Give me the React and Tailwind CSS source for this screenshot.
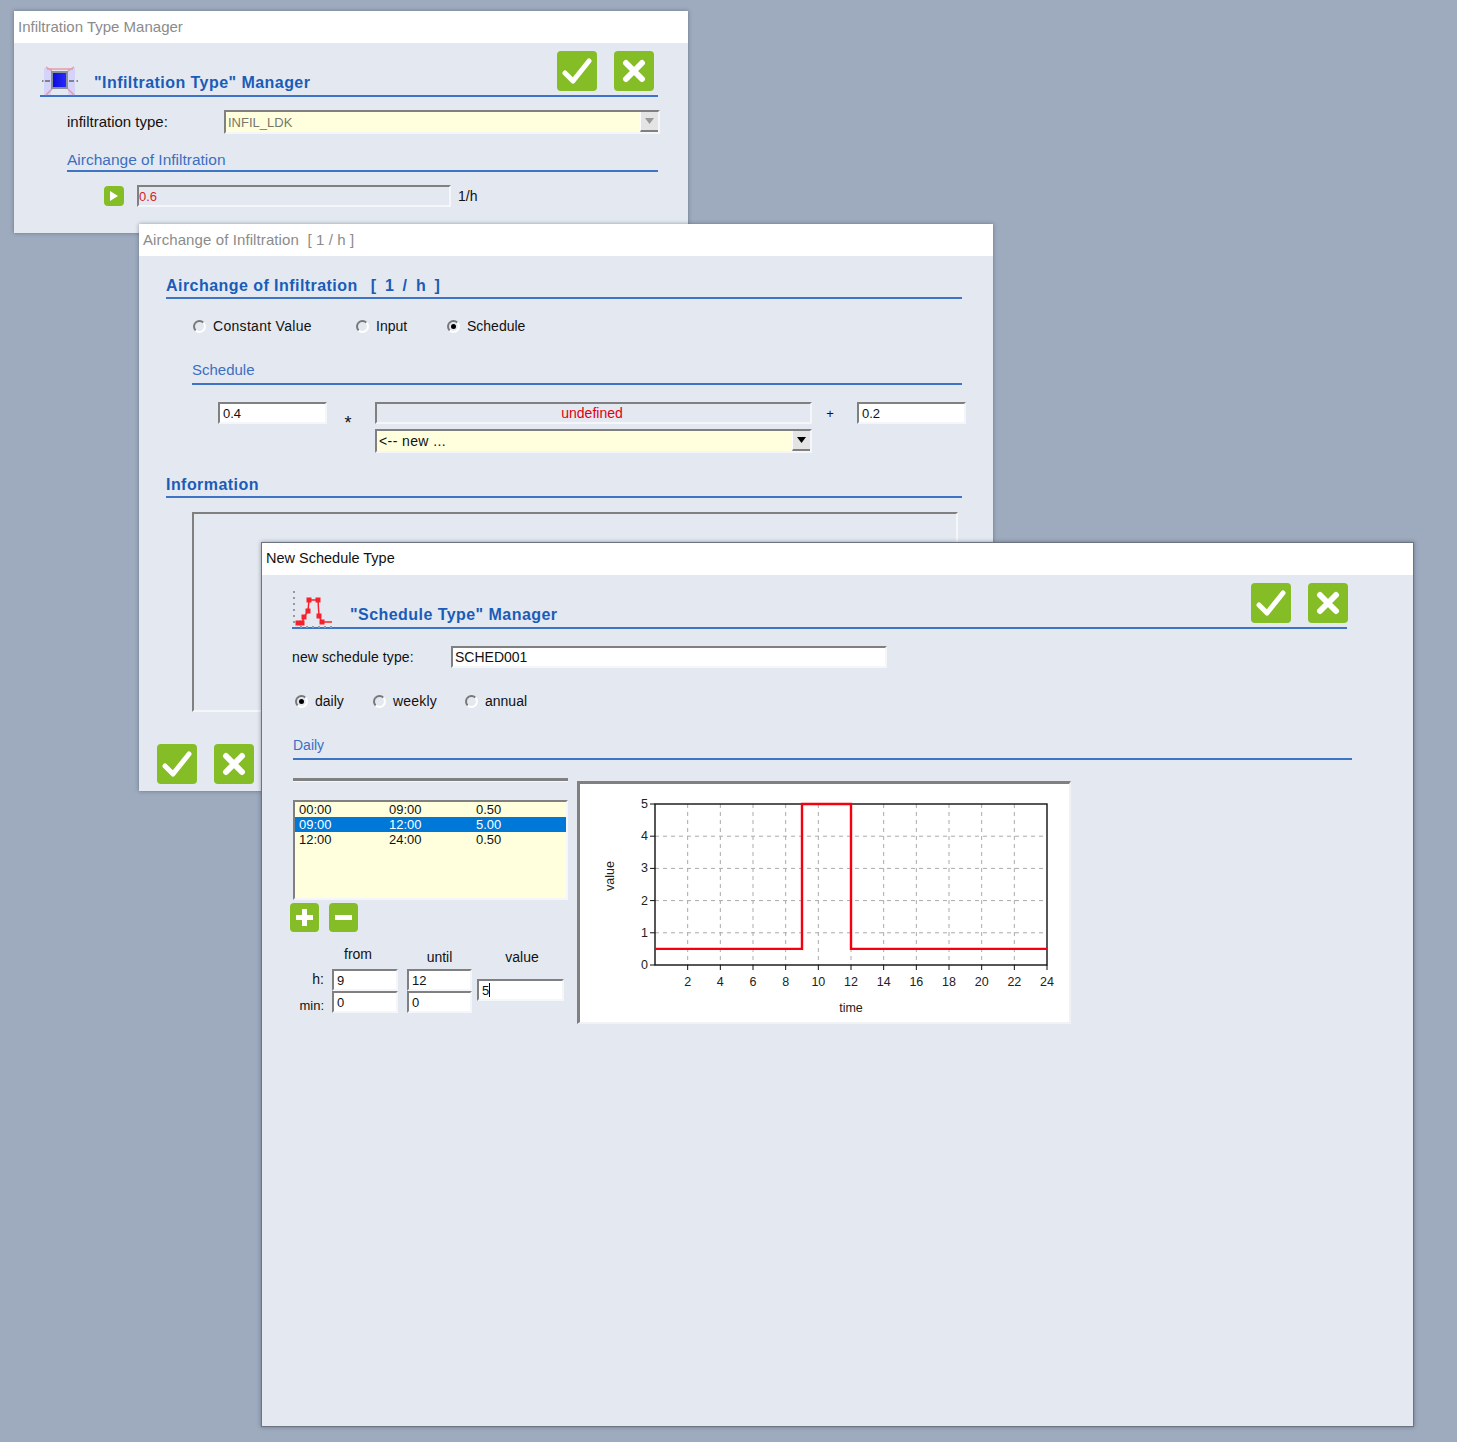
const Field = ({ className = "", children }) => (
  <div className={`flex items-center overflow-hidden border-t-2 border-l-2 border-t-[#808080] border-l-[#808080] border-r-2 border-b-2 border-r-[#f4f6f9] border-b-[#f4f6f9] text-[13px] leading-none ${className}`}>
    {children}
  </div>
);

const GreenButton = ({ className = "", children }) => (
  <div className={`flex shrink-0 items-center justify-center rounded-[4px] bg-[#84bd25] ${className}`}>{children}</div>
);

const CheckIcon = () => (
  <svg width="30" height="26" viewBox="0 0 30 26">
    <path d="M3 15 L11 23 L27 3" fill="none" stroke="#fff" strokeWidth="5" strokeLinejoin="round" strokeLinecap="round" />
  </svg>
);

const CrossIcon = () => (
  <svg width="24" height="24" viewBox="0 0 24 24">
    <path d="M4 4 L20 20 M20 4 L4 20" fill="none" stroke="#fff" strokeWidth="6" strokeLinecap="round" />
  </svg>
);

const OkCancel = ({ className = "" }) => (
  <div className={`flex gap-[17px] ${className}`}>
    <GreenButton className="h-[40px] w-[40px]"><CheckIcon /></GreenButton>
    <GreenButton className="h-[40px] w-[40px]"><CrossIcon /></GreenButton>
  </div>
);

const Radio = ({ label, checked, className = "" }) => (
  <div className={`flex items-center gap-[7px] text-[14px] leading-none text-[#111] ${className}`}>
    <span className="flex h-[13px] w-[13px] shrink-0 items-center justify-center rounded-full border-2 border-t-[#777] border-l-[#777] border-r-white border-b-white bg-[#e4e9f1]">
      {checked && <span className="h-[5px] w-[5px] shrink-0 rounded-full bg-black" />}
    </span>
    {label}
  </div>
);

const Section = ({ className = "", children }) => (
  <div className={`flex items-center border-b-2 border-[#3d74c4] leading-none text-[#3d6fc0] ${className}`}>
    {children}
  </div>
);

const BoldHeading = ({ children }) => (
  <span className="text-[16px] font-bold leading-none tracking-[0.45px] text-[#1a5cb8]">{children}</span>
);

const WindowIcon = () => (
  <svg width="40" height="34" viewBox="0 0 40 34" className="-mb-[2px] overflow-visible">
    <defs>
      <linearGradient id="paneBlue" x1="0" x2="1" y1="0" y2="0">
        <stop offset="0" stopColor="#0c0cd8" />
        <stop offset="1" stopColor="#2a2aff" />
      </linearGradient>
    </defs>
    <rect x="4" y="5" width="7" height="27" fill="#d4d4fa" />
    <rect x="28" y="5" width="7" height="27" fill="#d4d4fa" />
    <path d="M6 4 L12 8 M34 4 L28 8 M6 32 L12 26 M34 32 L28 26 M7 6 H33" fill="none" stroke="#e59aa8" strokeWidth="1.5" />
    <rect x="12" y="9" width="15" height="16" fill="url(#paneBlue)" stroke="#8a8f9e" strokeWidth="2" />
    <path d="M2 18 H3.5 M5 18 H10 M29 18 H34 M36.5 18 H38" stroke="#666" strokeWidth="1.5" />
  </svg>
);

const ScheduleIcon = () => {
  const points = [[6, 34], [10, 34], [12, 28], [16, 22], [17, 11], [26, 11], [27, 27], [30, 33]];
  return (
    <svg width="42" height="40" viewBox="0 0 42 40" className="-mb-[2px] overflow-visible">
      <path d="M2 2 V36 M8 38 H40" stroke="#999" strokeWidth="2" strokeDasharray="2 4" fill="none" />
      <polyline points="6,34 10,34 12,28 16,22 17,11 26,11 27,27 30,33 40,33" fill="none" stroke="#f5222d" strokeWidth="1.5" />
      {points.map(([x, y]) => (
        <rect key={`${x}-${y}`} x={x - 2.5} y={y - 2.5} width="5" height="5" fill="#f5222d" />
      ))}
    </svg>
  );
};

const ComboButton = ({ color }) => (
  <span className="ml-auto flex h-full w-[18px] items-center justify-center border-b-2 border-b-[#808080] border-l border-l-white bg-[#e4e4e4]">
    <svg width="9" height="6" viewBox="0 0 9 6"><path d="M0 0 H9 L4.5 6 Z" fill={color} /></svg>
  </span>
);

const ScheduleChart = () => {
  const left = 75, top = 20, w = 392, h = 161;
  const xAt = (t) => left + (t * w) / 24;
  const yAt = (v) => top + h - (v * h) / 5;
  const hours = [2, 4, 6, 8, 10, 12, 14, 16, 18, 20, 22, 24];
  const values = [0, 1, 2, 3, 4, 5];
  const labelFont = { fontFamily: "'Liberation Sans', sans-serif", fontSize: 12.5, fill: "#222" };
  return (
    <svg width="489" height="238" viewBox="0 0 489 238">
      {hours.slice(0, -1).map((t) => (
        <line key={t} x1={xAt(t)} x2={xAt(t)} y1={top} y2={top + h} stroke="#aaa" strokeDasharray="4 4" />
      ))}
      {values.slice(1, -1).map((v) => (
        <line key={v} x1={left} x2={left + w} y1={yAt(v)} y2={yAt(v)} stroke="#aaa" strokeDasharray="4 4" />
      ))}
      <rect x={left} y={top} width={w} height={h} fill="none" stroke="#111" strokeWidth="1.4" />
      {values.map((v) => (
        <g key={v}>
          <line x1={left - 5} x2={left} y1={yAt(v)} y2={yAt(v)} stroke="#111" />
          <text x={left - 7} y={yAt(v) + 4} textAnchor="end" {...labelFont}>{v}</text>
        </g>
      ))}
      {hours.map((t) => (
        <g key={t}>
          <line x1={xAt(t)} x2={xAt(t)} y1={top + h} y2={top + h + 5} stroke="#111" />
          <text x={xAt(t)} y={top + h + 21} textAnchor="middle" {...labelFont}>{t}</text>
        </g>
      ))}
      <path
        d={`M${xAt(0)} ${yAt(0.5)} H${xAt(9)} V${yAt(5)} H${xAt(12)} V${yAt(0.5)} H${xAt(24)}`}
        fill="none"
        stroke="#f5000f"
        strokeWidth="2.4"
      />
      <text x="271" y="228" textAnchor="middle" {...labelFont}>time</text>
      <text x="0" y="0" textAnchor="middle" transform="translate(34 92) rotate(-90)" {...labelFont}>value</text>
    </svg>
  );
};

const scheduleRows = [
  { from: "00:00", until: "09:00", value: "0.50" },
  { from: "09:00", until: "12:00", value: "5.00", selected: true },
  { from: "12:00", until: "24:00", value: "0.50" },
];

const TitleBar = ({ className = "", children }) => (
  <div className={`flex h-[32px] shrink-0 items-center bg-white pl-[4px] ${className}`}>{children}</div>
);

export default function App() {
  return (
    <div className="relative h-[1442px] w-[1457px] overflow-hidden bg-[#9eaabd] font-['Liberation_Sans',sans-serif] text-[#111]">
      {/* infiltration type manager */}
      <div className="absolute left-[14px] top-[11px] flex h-[222px] w-[674px] flex-col bg-[#e4e9f1] shadow-[0_0_4px_rgba(40,50,70,0.45)]">
        <TitleBar className="text-[15px] text-[#8b8b8b]">Infiltration Type Manager</TitleBar>
        <div className="ml-[26px] mt-[8px] flex h-[46px] w-[618px] items-end border-b-2 border-[#3d74c4] leading-none">
          <div className="w-[54px] shrink-0"><WindowIcon /></div>
          <div className="mb-[4px]"><BoldHeading>"Infiltration Type" Manager</BoldHeading></div>
          <OkCancel className="mb-[4px] ml-auto mr-[4px] self-end" />
        </div>
        <div className="ml-[53px] mt-[13px] flex items-center">
          <span className="w-[157px] text-[15px]">infiltration type:</span>
          <Field className="h-[24px] w-[436px] bg-[#ffffdd] pl-[2px] text-[#77776a]">
            <span>INFIL_LDK</span>
            <ComboButton color="#999" />
          </Field>
        </div>
        <Section className="ml-[53px] mt-[15px] h-[23px] w-[591px] text-[15.5px]">Airchange of Infiltration</Section>
        <div className="ml-[90px] mt-[13px] flex items-center">
          <GreenButton className="mr-[13px] h-[20px] w-[20px]">
            <svg width="8" height="10" viewBox="0 0 8 10"><path d="M0 0 L8 5 L0 10 Z" fill="#fff" /></svg>
          </GreenButton>
          <Field className="h-[22px] w-[314px] text-[#d8232a]">0.6</Field>
          <span className="ml-[7px] text-[14px]">1/h</span>
        </div>
      </div>

      {/* airchange dialog */}
      <div className="absolute left-[139px] top-[224px] flex h-[567px] w-[854px] flex-col bg-[#e4e9f1] shadow-[0_0_4px_rgba(40,50,70,0.45)]">
        <TitleBar className="text-[15px] tracking-[0.1px] text-[#8b8b8b]">Airchange of Infiltration&nbsp;&nbsp;[ 1 / h ]</TitleBar>
        <div className="ml-[27px] mt-[14px] flex h-[29px] w-[796px] items-center border-b-2 border-[#3d74c4] pt-[4px]">
          <BoldHeading>Airchange of Infiltration</BoldHeading>
          <span className="ml-[13px]"><BoldHeading><span className="tracking-[2.2px]">[ 1 / h ]</span></BoldHeading></span>
        </div>
        <div className="ml-[54px] mt-[19px] flex h-[16px]">
          <Radio label="Constant Value" className="w-[163px] tracking-[0.3px]" />
          <Radio label="Input" className="w-[91px]" />
          <Radio label="Schedule" checked />
        </div>
        <Section className="ml-[53px] mt-[25px] h-[26px] w-[770px] pb-[4px] text-[15px]">Schedule</Section>
        <div className="ml-[79px] mt-[17px] flex items-start">
          <Field className="h-[22px] w-[109px] bg-white pl-[3px]">0.4</Field>
          <span className="mt-[12px] w-[48px] pr-[6px] text-center text-[18px] leading-none">*</span>
          <div className="flex w-[437px] flex-col gap-[5px]">
            <Field className="h-[22px] justify-center pr-[3px] text-[14px] text-[#e0000f]">undefined</Field>
            <Field className="h-[24px] bg-[#ffffdd] pl-[2px] text-[14px] tracking-[0.4px]">
              <span>&lt;-- new ...</span>
              <ComboButton color="#000" />
            </Field>
          </div>
          <span className="mt-[5px] w-[45px] pr-[9px] text-center text-[13px] leading-none">+</span>
          <Field className="h-[22px] w-[109px] bg-white pl-[3px]">0.2</Field>
        </div>
        <div className="ml-[27px] mt-[20px] flex h-[25px] w-[796px] items-center border-b-2 border-[#3d74c4]">
          <BoldHeading>Information</BoldHeading>
        </div>
        <Field className="ml-[53px] mt-[14px] h-[200px] w-[766px]" />
        <OkCancel className="ml-[18px] mt-[32px]" />
      </div>

      {/* new schedule dialog */}
      <div className="absolute left-[261px] top-[542px] flex h-[885px] w-[1153px] flex-col border border-[#6d7480] bg-[#e4e9f1] shadow-[0_0_4px_rgba(40,50,70,0.45)]">
        <TitleBar className="text-[14.5px] text-[#111]">New Schedule Type</TitleBar>
        <div className="ml-[30px] mt-[8px] flex h-[46px] w-[1055px] items-end border-b-2 border-[#3d74c4] leading-none">
          <div className="w-[58px] shrink-0"><ScheduleIcon /></div>
          <div className="mb-[4px]"><BoldHeading>"Schedule Type" Manager</BoldHeading></div>
          <OkCancel className="-mr-px mb-[4px] ml-auto self-end" />
        </div>
        <div className="ml-[30px] mt-[17px] flex items-center">
          <span className="w-[159px] text-[14px] tracking-[0.1px]">new schedule type:</span>
          <Field className="h-[22px] w-[436px] bg-white pl-[2px] text-[14px]">SCHED001</Field>
        </div>
        <div className="ml-[33px] mt-[25px] flex h-[16px]">
          <Radio label="daily" checked className="w-[78px]" />
          <Radio label="weekly" className="w-[92px] tracking-[0.2px]" />
          <Radio label="annual" />
        </div>
        <Section className="ml-[31px] mt-[26px] h-[25px] w-[1059px] pb-[4px] text-[14px]">Daily</Section>
        <div className="ml-[31px] mt-[18px] flex items-start">
          <div className="w-[275px]">
            <div className="h-[4px] border-t-[3px] border-[#808080] border-b border-b-[#f4f6f9]" />
            <div className="mt-[18px] h-[100px] border-t-2 border-l-2 border-t-[#808080] border-l-[#808080] border-r-2 border-b-2 border-r-[#f4f6f9] border-b-[#f4f6f9] bg-[#ffffdd] text-[13px] leading-[15px]">
              {scheduleRows.map((row) => (
                <div key={row.from} className={`flex h-[15px] pl-[4px] ${row.selected ? "bg-[#0078d7] text-white" : ""}`}>
                  <span className="w-[90px]">{row.from}</span>
                  <span className="w-[87px]">{row.until}</span>
                  <span>{row.value}</span>
                </div>
              ))}
            </div>
            <div className="-ml-[3px] mt-[3px] flex gap-[10px]">
              <GreenButton className="h-[29px] w-[29px]">
                <svg width="21" height="21" viewBox="0 0 21 21"><path d="M10.5 2 V19 M2 10.5 H19" stroke="#fff" strokeWidth="5" /></svg>
              </GreenButton>
              <GreenButton className="h-[29px] w-[29px]">
                <svg width="21" height="21" viewBox="0 0 21 21"><path d="M2 10.5 H19" stroke="#fff" strokeWidth="5" /></svg>
              </GreenButton>
            </div>
            <div className="flex items-start text-[14px] leading-[16px]">
              <div className="w-[39px] pr-[8px] pt-[39px] text-right">
                <div>h:</div>
                <div className="mt-[11px] text-[13px]">min:</div>
              </div>
              <div className="w-[66px] pt-[14px]">
                <div className="pl-[12px]">from</div>
                <div className="mt-[7px] flex flex-col">
                  <Field className="h-[22px] bg-white pl-[3px]">9</Field>
                  <Field className="h-[22px] bg-white pl-[3px]">0</Field>
                </div>
              </div>
              <div className="ml-[9px] w-[65px] pt-[17px]">
                <div className="text-center">until</div>
                <div className="mt-[4px] flex flex-col">
                  <Field className="h-[22px] bg-white pl-[3px]">12</Field>
                  <Field className="h-[22px] bg-white pl-[3px]">0</Field>
                </div>
              </div>
              <div className="ml-[5px] w-[87px] pt-[17px]">
                <div className="pl-[3px] text-center">value</div>
                <Field className="mt-[14px] h-[22px] bg-white pl-[3px]">
                  <span>5</span>
                  <span className="h-[14px] w-px bg-black" />
                </Field>
              </div>
            </div>
          </div>
          <div className="ml-[9px] mt-[3px] h-[243px] w-[494px] border-t-[3px] border-l-[3px] border-t-[#808080] border-l-[#808080] border-r-2 border-b-2 border-r-[#f0f2f6] border-b-[#f0f2f6] bg-white">
            <ScheduleChart />
          </div>
        </div>
      </div>
    </div>
  );
}
